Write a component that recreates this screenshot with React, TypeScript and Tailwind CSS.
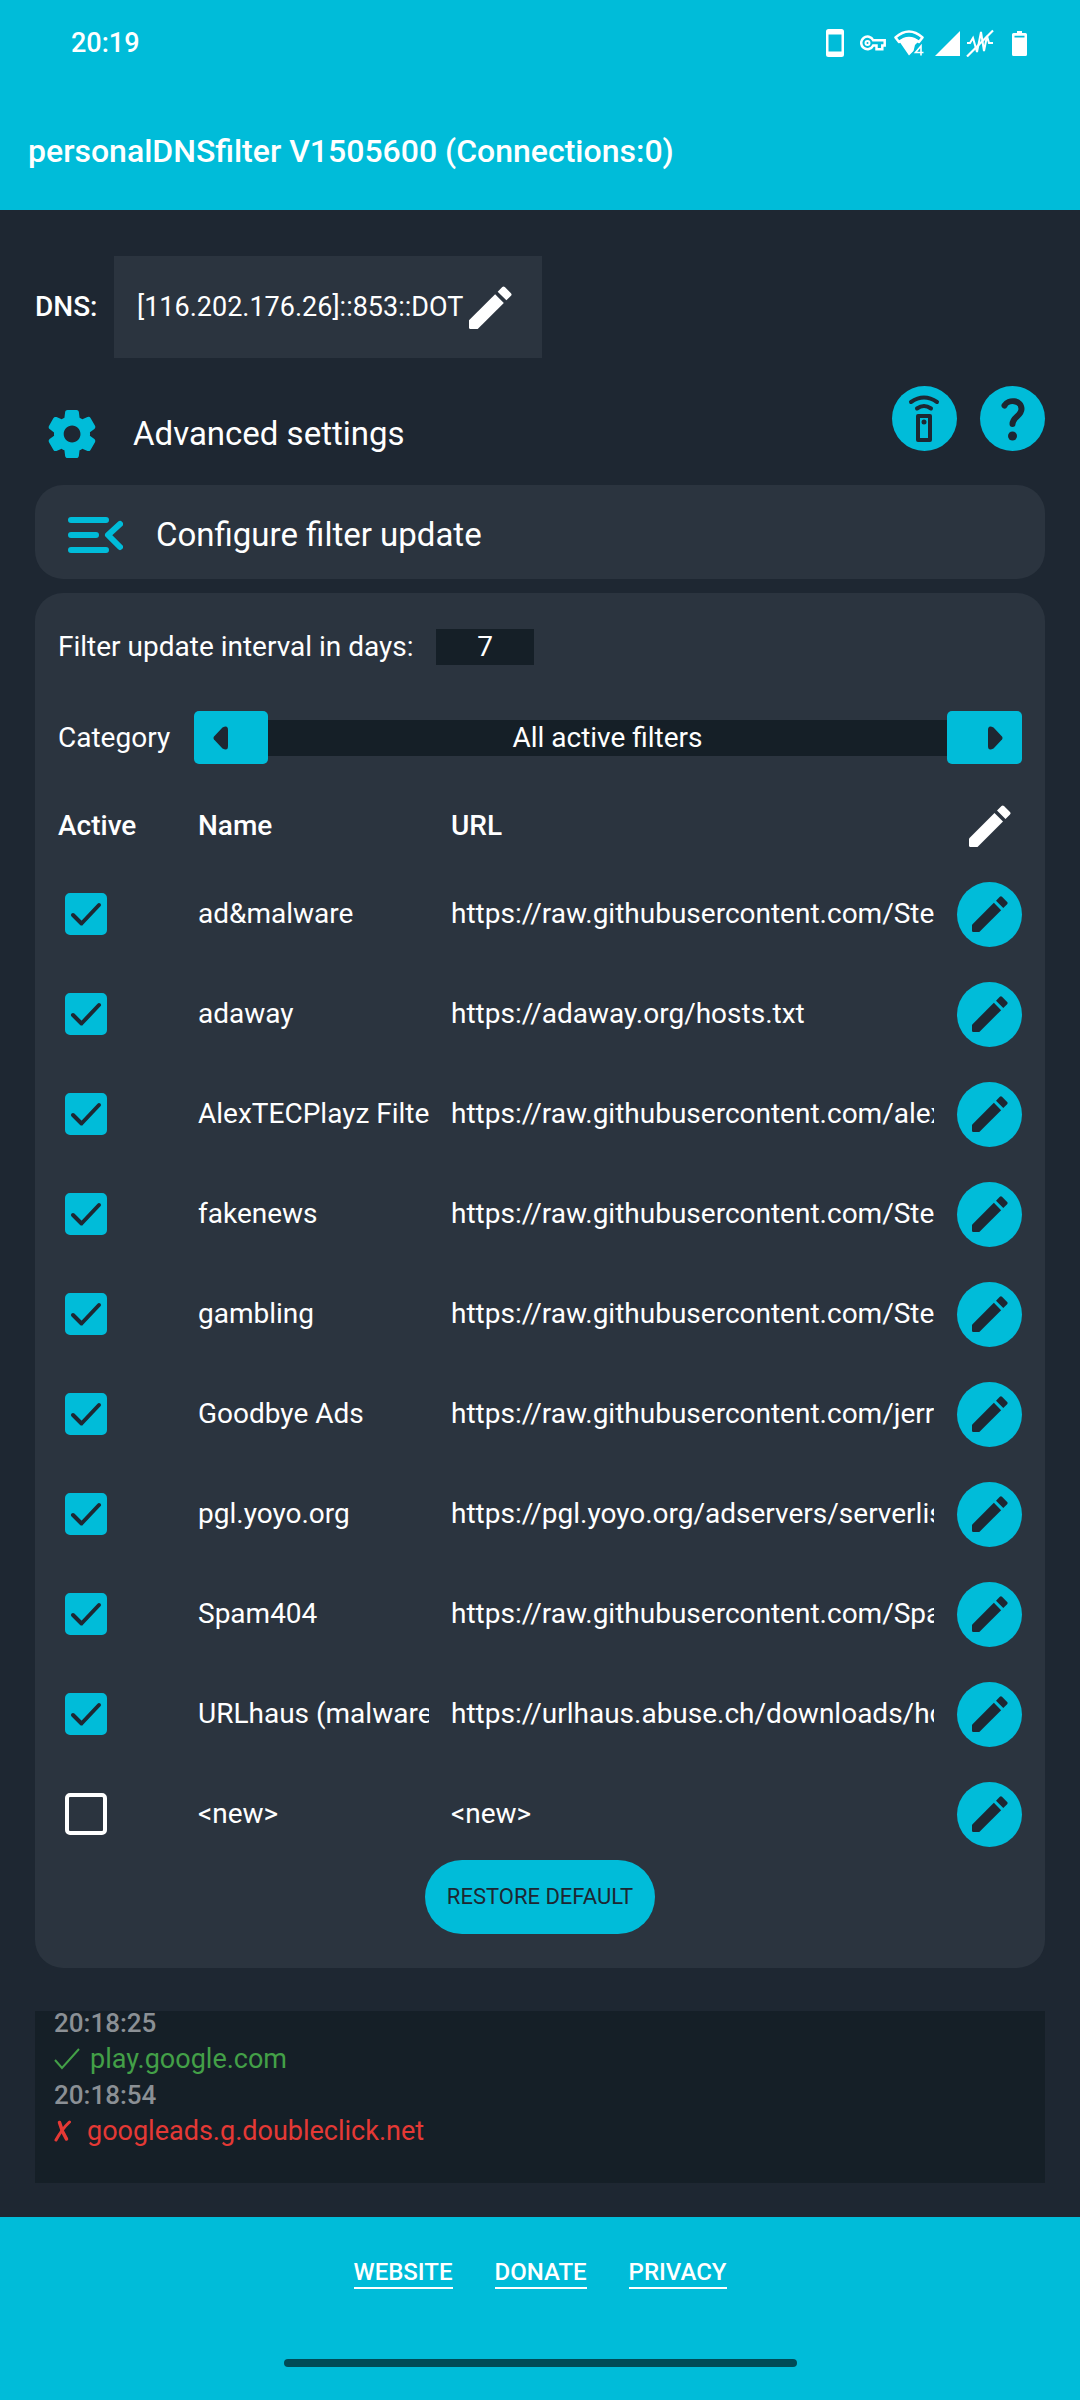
import { useState } from "react";

type Filter = { name: string; url: string; active: boolean };

const initialFilters: Filter[] = [
  { name: "ad&malware", url: "https://raw.githubusercontent.com/StevenBlack/hosts/master/hosts", active: true },
  { name: "adaway", url: "https://adaway.org/hosts.txt", active: true },
  { name: "AlexTECPlayz Filter", url: "https://raw.githubusercontent.com/alextecplayz/filters/main/hosts", active: true },
  { name: "fakenews", url: "https://raw.githubusercontent.com/StevenBlack/hosts/master/fakenews", active: true },
  { name: "gambling", url: "https://raw.githubusercontent.com/StevenBlack/hosts/master/gambling", active: true },
  { name: "Goodbye Ads", url: "https://raw.githubusercontent.com/jerryn70/GoodbyeAds/master/Hosts", active: true },
  { name: "pgl.yoyo.org", url: "https://pgl.yoyo.org/adservers/serverlist.php", active: true },
  { name: "Spam404", url: "https://raw.githubusercontent.com/Spam404/lists/master/main", active: true },
  { name: "URLhaus (malware)", url: "https://urlhaus.abuse.ch/downloads/hostfile/", active: true },
  { name: "<new>", url: "<new>", active: false },
];

function Pencil({ className }: { className: string }) {
  return (
    <svg viewBox="0 0 42 42" fill="currentColor" aria-hidden="true" className={className}>
      <path d="M0 33.5 25.5 8 34 16.500 8.500 42H1.500Q0 42 0 40.500Z" />
      <path d="M28 5.500 32.500 1Q33.700-.2 35 1L41 7Q42.200 8.300 41 9.500L36.500 14Z" />
    </svg>
  );
}

function StatusIcons() {
  return (
    <div className="flex items-center text-white" aria-hidden="true">
      <svg viewBox="0 0 18 28" className="h-7 w-[18px]" fill="currentColor">
        <path fillRule="evenodd" d="M2.500 0h13Q18 0 18 2.500v23Q18 28 15.500 28h-13Q0 28 0 25.500v-23Q0 0 2.500 0ZM2.500 5.500v17h13v-17Z" />
      </svg>
      <svg viewBox="0 0 26 16" className="ml-4 h-4 w-[26px]" fill="none" stroke="currentColor" strokeWidth="2.500">
        <path d="M13.200 5.200H24.700V10.500H22.300V14.200H16.500V10.500H13.200A6.300 6.300 0 1 1 13.200 5.200Z" />
        <circle cx="7.500" cy="8" r="2" strokeWidth="2" />
      </svg>
      <svg viewBox="0 0 30 26" className="ml-2 h-[26px] w-[30px]" fill="none">
        <path d="M1.500 7.500Q15-4.500 28.500 7.500L25 12Q15 4 5 12Z" stroke="currentColor" strokeWidth="2.500" strokeLinejoin="round" />
        <path d="M5 11Q15 3.500 25 11L21 15 19.500 21 15 25.500Z" fill="currentColor" />
        <path d="M27 25.500V16L21.500 22.500H29.500" stroke="#00bcd9" strokeWidth="4" />
        <path d="M27 25.500V16L21.500 22.500H29.500" stroke="currentColor" strokeWidth="1.600" />
      </svg>
      <svg viewBox="0 0 25 25" className="ml-[11px] size-[25px]" fill="currentColor">
        <path d="M25 0V25H0Z" />
      </svg>
      <svg viewBox="0 0 28 28" className="ml-1.5 size-7" fill="none" stroke="currentColor" strokeWidth="2">
        <path d="M1 14H4L7 9 11 23 15 3 18 22 21 7 23 14H27" />
        <path d="M1 27.500 27 1.500" strokeWidth="2.200" />
      </svg>
      <svg viewBox="0 0 15 25" className="ml-[18px] h-[25px] w-[15px]" fill="currentColor">
        <path fillRule="evenodd" d="M5 0h5v2h3.500Q15 2 15 3.500v20Q15 25 13.500 25h-12Q0 25 0 23.500v-20Q0 2 1.500 2H5ZM2.500 4.700v1.800h10V4.700Z" />
      </svg>
    </div>
  );
}

function RoundButton({ label, children }: { label: string; children: React.ReactNode }) {
  return (
    <button type="button" aria-label={label} className="flex size-[65px] shrink-0 items-center justify-center rounded-full bg-[#00bcd9] text-[#1e2732]">
      {children}
    </button>
  );
}

export default function App() {
  const [filters, setFilters] = useState(initialFilters);
  const [days, setDays] = useState("7");

  const toggle = (index: number) =>
    setFilters(filters.map((f, i) => (i === index ? { ...f, active: !f.active } : f)));

  return (
    <div className="flex min-h-screen flex-col bg-[#1e2732] font-['Roboto',sans-serif] text-[28px] leading-9 text-white">
      <header className="bg-[#00bcd9]">
        <div className="flex h-[86px] items-center justify-between pr-[53px] pl-[71px]">
          <time className="text-[27px] font-medium">20:19</time>
          <StatusIcons />
        </div>
        <h1 className="px-7 pt-[47px] pb-[41px] text-[32px] font-medium">personalDNSfilter V1505600 (Connections:0)</h1>
      </header>

      <main className="flex flex-1 flex-col px-[35px] pt-[46px] pb-[34px]">
        <div className="flex items-center">
          <span className="w-[79px] font-medium">DNS:</span>
          <button type="button" aria-label="Edit DNS server" className="flex h-[102px] items-center gap-1.5 bg-[#2b343f] pr-[30px] pl-[23px] text-[27px]">
            [116.202.176.26]::853::DOT
            <Pencil className="size-[43px]" />
          </button>
        </div>

        <div className="mt-7 flex items-start justify-between">
          <button type="button" className="flex h-24 items-center gap-[37px] pl-[13px] text-[33px]">
            <svg viewBox="2 2 20 20" fill="#00bcd9" aria-hidden="true" className="size-12">
              <path d="M19.500 12c0-.23-.01-.45-.03-.68l1.860-1.410c.4-.3.510-.860.260-1.300l-1.870-3.230a.987.987 0 0 0-1.250-.42l-2.150.910c-.37-.26-.76-.49-1.170-.68l-.29-2.310c-.06-.5-.49-.88-.99-.88h-3.730c-.51 0-.94.380-1 .880l-.29 2.310c-.41.190-.8.420-1.170.680l-2.150-.91c-.46-.2-1-.02-1.250.420L2.410 8.620c-.25.440-.14.990.260 1.300l1.860 1.410a7.343 7.343 0 0 0 0 1.350l-1.860 1.410c-.4.300-.51.860-.26 1.300l1.870 3.230c.25.440.79.620 1.250.420l2.150-.91c.37.260.76.490 1.170.680l.29 2.310c.06.500.49.880.99.880h3.730c.5 0 .93-.38.990-.88l.29-2.310c.41-.19.800-.42 1.170-.68l2.150.910c.46.200 1 .02 1.250-.42l1.870-3.230c.25-.44.140-.99-.26-1.300l-1.860-1.410c.03-.23.040-.45.040-.68zm-7.460 3.500c-1.930 0-3.500-1.570-3.500-3.500s1.570-3.500 3.500-3.500 3.500 1.570 3.500 3.500-1.570 3.500-3.500 3.500z" />
            </svg>
            Advanced settings
          </button>
          <div className="flex gap-[23px]">
            <RoundButton label="Remote control">
              <svg viewBox="0 0 65 65" fill="none" stroke="currentColor" className="size-full">
                <rect x="26" y="30" width="12" height="24" strokeWidth="4" strokeLinejoin="round" />
                <circle cx="32" cy="36" r="2.500" fill="currentColor" stroke="none" />
                <path d="M19 16Q32 7 45 16M25 22.500Q32 17.500 39 22.500" strokeWidth="4" strokeLinecap="round" />
              </svg>
            </RoundButton>
            <RoundButton label="Help">
              <svg viewBox="0 0 65 65" fill="none" stroke="currentColor" className="size-full">
                <path d="M24.500 19.500C28 13 41.500 13.500 41.500 23C41.500 30 32.500 31 32.500 38" strokeWidth="6" strokeLinecap="round" />
                <circle cx="32.500" cy="50" r="4.500" fill="currentColor" stroke="none" />
              </svg>
            </RoundButton>
          </div>
        </div>

        <button type="button" className="mt-[3px] flex h-[94px] items-center gap-[33px] rounded-[28px] bg-[#2b343f] pt-1.5 pl-8 text-[33px]">
          <svg viewBox="0 0 56 38" fill="none" stroke="#00bcd9" strokeWidth="6" strokeLinecap="round" aria-hidden="true" className="h-[38px] w-14">
            <path d="M4 4H39M4 19H29M4 34H39M53 8 41 19 53 31" strokeLinejoin="round" />
          </svg>
          Configure filter update
        </button>

        <section className="mt-3.5 flex flex-col rounded-[28px] bg-[#2b343f] px-[23px] pt-9 pb-[34px]">
          <div className="flex items-center gap-[18px]">
            <label htmlFor="interval" className="min-w-[360px]">Filter update interval in days:</label>
            <input
              id="interval"
              value={days}
              onChange={(e) => setDays(e.target.value)}
              className="h-9 w-[98px] bg-[#151f27] text-center outline-none"
            />
          </div>

          <div className="mt-[46px] flex items-center">
            <span className="w-[136px] shrink-0">Category</span>
            <button type="button" aria-label="Previous category" className="flex h-[53px] w-[74px] shrink-0 items-center rounded-[5px] bg-[#00bcd9] pl-[19px]">
              <svg viewBox="0 0 16 24" fill="#1e2732" className="h-6 w-4">
                <path d="M1 10.500 9.500 1.500Q15 -1.500 15 4V20Q15 25.500 9.500 22.500L1 13.500Q0 12 1 10.500Z" />
              </svg>
            </button>
            <output className="h-9 flex-1 bg-[#151f27] text-center">All active filters</output>
            <button type="button" aria-label="Next category" className="flex h-[53px] w-[75px] shrink-0 items-center justify-end rounded-[5px] bg-[#00bcd9] pr-[19px]">
              <svg viewBox="0 0 16 24" fill="#1e2732" className="h-6 w-4">
                <path d="M15 10.500 6.500 1.500Q1 -1.500 1 4V20Q1 25.500 6.500 22.500L15 13.500Q16 12 15 10.500Z" />
              </svg>
            </button>
          </div>

          <table className="mt-6 w-full table-fixed text-left">
            <thead>
              <tr className="h-[76px]">
                <th scope="col" className="w-[140px] font-medium">Active</th>
                <th scope="col" className="w-[253px] font-medium">Name</th>
                <th scope="col" className="font-medium">URL</th>
                <th scope="col" className="w-[65px]">
                  <Pencil className="mx-auto size-[42px]" />
                </th>
              </tr>
            </thead>
            <tbody>
              {filters.map((f, i) => (
                <tr key={i} className="h-[100px]">
                  <td className="pl-[7px]">
                    <span className="relative block size-[42px]">
                      <input
                        type="checkbox"
                        aria-label={`${f.name} active`}
                        checked={f.active}
                        onChange={() => toggle(i)}
                        className="block size-[42px] appearance-none rounded-[5px] border-4 border-white checked:border-[#00bcd9] checked:bg-[#00bcd9]"
                      />
                      {f.active && (
                        <svg viewBox="0 0 42 42" fill="none" stroke="#1e2732" strokeWidth="4" strokeLinecap="round" strokeLinejoin="round" aria-hidden="true" className="pointer-events-none absolute inset-0">
                          <path d="M8 22 16.500 30.500 34 12" />
                        </svg>
                      )}
                    </span>
                  </td>
                  <td className="pr-[22px]">
                    <div className="overflow-hidden whitespace-nowrap">{f.name}</div>
                  </td>
                  <td className="pr-[23px]">
                    <div className="overflow-hidden whitespace-nowrap">{f.url}</div>
                  </td>
                  <td>
                    <RoundButton label={`Edit ${f.name}`}>
                      <Pencil className="size-9" />
                    </RoundButton>
                  </td>
                </tr>
              ))}
            </tbody>
          </table>

          <button type="button" className="-mt-1 h-[74px] self-center rounded-full bg-[#00bcd9] px-[22px] text-[22px] text-[#1e2732]">
            RESTORE DEFAULT
          </button>
        </section>

        <section aria-label="Query log" className="mt-[43px] flex-1 overflow-hidden bg-[#151f27] px-[19px] text-[27px] leading-9">
          <p className="-mt-1.5 text-[26px] font-medium text-[#8b9095]">20:18:25</p>
          <p className="flex items-center gap-2.5 text-[#43a047]">
            <svg viewBox="0 0 26 22" fill="none" stroke="currentColor" strokeWidth="2" aria-label="allowed" className="h-[22px] w-[26px]">
              <path d="M1 12 8 20 25 1" />
            </svg>
            play.google.com
          </p>
          <p className="text-[26px] font-medium text-[#8b9095]">20:18:54</p>
          <p className="flex items-center gap-4 text-[#e53935]">
            <svg viewBox="0 0 17 22" fill="none" stroke="currentColor" strokeLinecap="round" aria-label="blocked" className="h-[22px] w-[17px]">
              <path d="M15.500 2Q8 9 2 20" strokeWidth="3" />
              <path d="M5.500 2.500Q8 12 12.500 19" strokeWidth="3.500" />
            </svg>
            googleads.g.doubleclick.net
          </p>
        </section>
      </main>

      <footer className="flex h-[183px] flex-col items-center justify-between bg-[#00bcd9] pt-10 pb-[33px]">
        <nav className="flex gap-[42px] text-[24px] leading-[30px] font-medium">
          {["WEBSITE", "DONATE", "PRIVACY"].map((label) => (
            <a key={label} href={`#${label.toLowerCase()}`} className="h-8 border-b-2 border-white">
              {label}
            </a>
          ))}
        </nav>
        <div className="h-2 w-[513px] max-w-full rounded-full bg-[#004b57]" />
      </footer>
    </div>
  );
}
